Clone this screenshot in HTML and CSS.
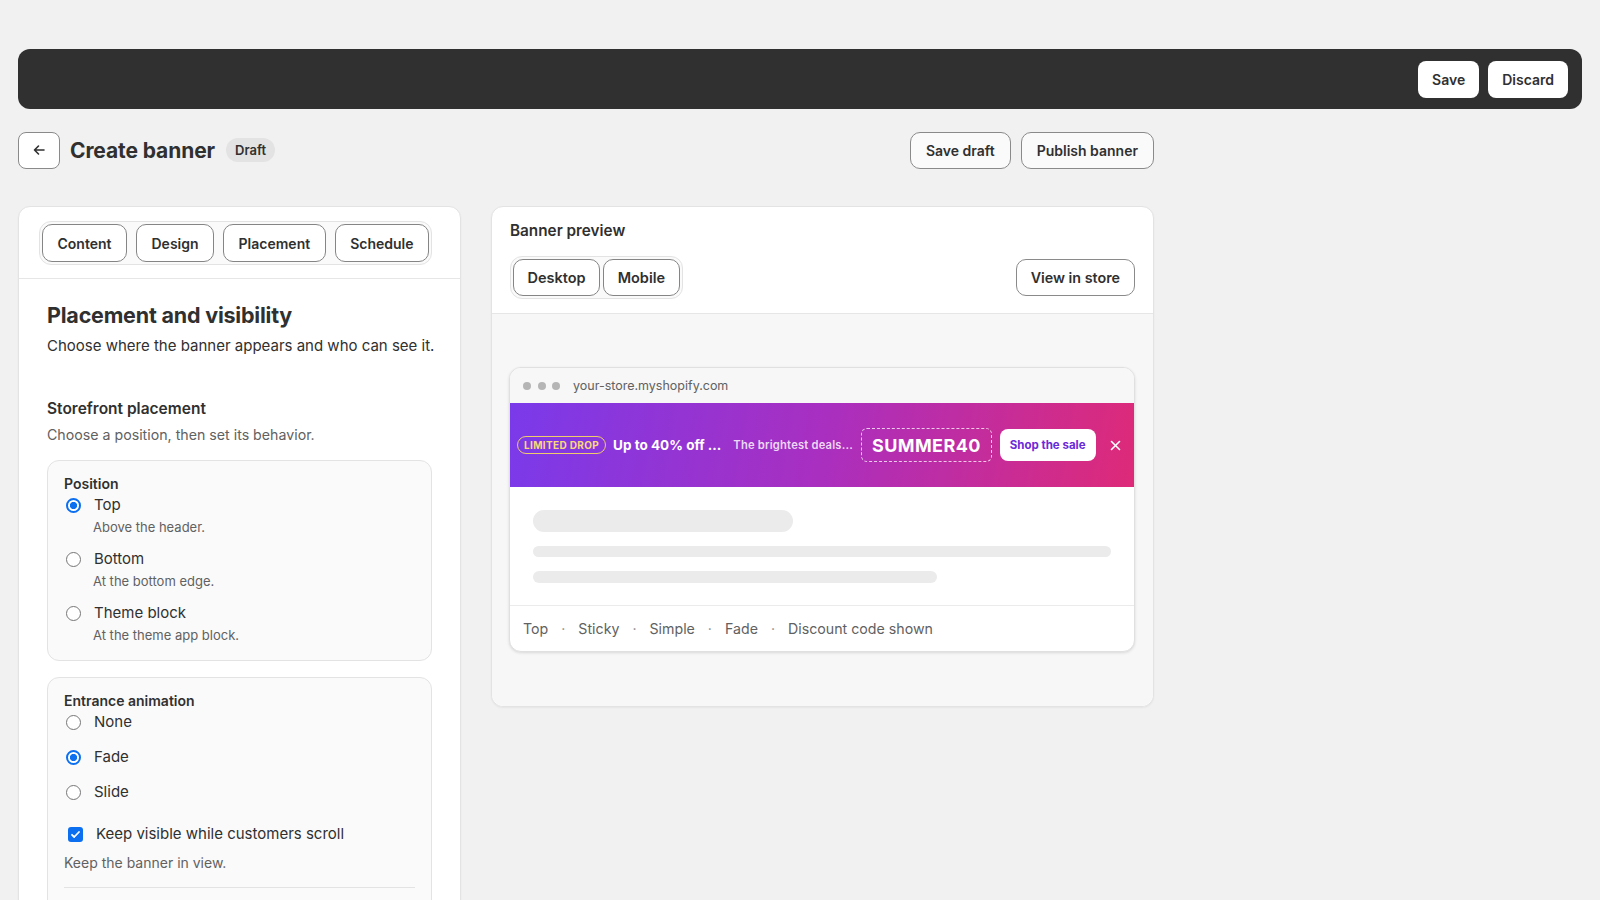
FILE: index.html
```html
<!DOCTYPE html>
<html lang="en">
<head>
<meta charset="utf-8">
<title>Create banner</title>
<link rel="stylesheet" href="styles.css">
</head>
<body>
<div class="page">
  <div class="topbar">
    <button class="btn-light">Save</button>
    <button class="btn-light">Discard</button>
  </div>

  <div class="wrap">
    <div class="header">
      <button class="back-btn" aria-label="Back">
        <svg width="14" height="14" viewBox="0 0 14 14"><path d="M12 7H2.5M6.5 3L2.5 7l4 4" fill="none" stroke="#303030" stroke-width="1.6" stroke-linecap="round" stroke-linejoin="round"/></svg>
      </button>
      <h1 class="title">Create banner</h1>
      <span class="badge">Draft</span>
      <div class="spacer"></div>
      <button class="btn-outline">Save draft</button>
      <button class="btn-outline">Publish banner</button>
    </div>

    <div class="main">
      <section class="card left-card">
        <div class="card-head">
          <div class="tabgroup">
            <button class="tab">Content</button>
            <button class="tab">Design</button>
            <button class="tab">Placement</button>
            <button class="tab">Schedule</button>
          </div>
        </div>
        <div class="card-body">
          <h2 class="section-title">Placement and visibility</h2>
          <p class="section-sub">Choose where the banner appears and who can see it.</p>

          <h3 class="group-title">Storefront placement</h3>
          <p class="group-sub">Choose a position, then set its behavior.</p>

          <div class="optcard pos-card">
            <div class="opt-label">Position</div>
            <div class="options">
              <div class="option">
                <div class="opt-row"><span class="radio on"></span><span>Top</span></div>
                <div class="opt-desc">Above the header.</div>
              </div>
              <div class="option">
                <div class="opt-row"><span class="radio"></span><span>Bottom</span></div>
                <div class="opt-desc">At the bottom edge.</div>
              </div>
              <div class="option">
                <div class="opt-row"><span class="radio"></span><span>Theme block</span></div>
                <div class="opt-desc">At the theme app block.</div>
              </div>
            </div>
          </div>

          <div class="optcard anim-card">
            <div class="opt-label">Entrance animation</div>
            <div class="options compact">
              <div class="opt-row"><span class="radio"></span><span>None</span></div>
              <div class="opt-row"><span class="radio on"></span><span>Fade</span></div>
              <div class="opt-row"><span class="radio"></span><span>Slide</span></div>
            </div>
            <div class="check-row">
              <span class="checkbox"><svg width="11" height="11" viewBox="0 0 11 11"><path d="M2 5.8l2.2 2.2L9 3" fill="none" stroke="#fff" stroke-width="1.8" stroke-linecap="round" stroke-linejoin="round"/></svg></span>
              <span>Keep visible while customers scroll</span>
            </div>
            <div class="check-desc">Keep the banner in view.</div>
            <div class="divider"></div>
            <div class="more-space"></div>
          </div>
        </div>
      </section>

      <section class="card right-card">
        <div class="preview-head">
          <div class="preview-title">Banner preview</div>
          <div class="preview-controls">
            <div class="seg">
              <button class="tab">Desktop</button>
              <button class="tab">Mobile</button>
            </div>
            <button class="btn-outline">View in store</button>
          </div>
        </div>
        <div class="preview-area">
          <div class="browser">
            <div class="browser-bar">
              <span class="dot"></span><span class="dot"></span><span class="dot"></span>
              <span class="url">your-store.myshopify.com</span>
            </div>
            <div class="promo">
              <span class="pill">LIMITED DROP</span>
              <span class="promo-head">Up to 40% off ...</span>
              <span class="promo-sub">The brightest deals...</span>
              <span class="code">SUMMER40</span>
              <span class="shop-btn">Shop the sale</span>
              <span class="close">
                <svg width="11" height="11" viewBox="0 0 11 11"><path d="M1.5 1.5l8 8M9.5 1.5l-8 8" stroke="#fff" stroke-width="1.6" stroke-linecap="round"/></svg>
              </span>
            </div>
            <div class="skeleton">
              <div class="sk sk1"></div>
              <div class="sk sk2"></div>
              <div class="sk sk3"></div>
            </div>
            <div class="summary">
              <span>Top</span><span class="sep">·</span>
              <span>Sticky</span><span class="sep">·</span>
              <span>Simple</span><span class="sep">·</span>
              <span>Fade</span><span class="sep">·</span>
              <span>Discount code shown</span>
            </div>
          </div>
        </div>
      </section>
    </div>
  </div>
</div>
</body>
</html>
```

FILE: styles.css
```css
* { box-sizing: border-box; }
html, body { margin: 0; padding: 0; }
body {
  background: #f1f1f1;
  font-family: Inter, "Noto Sans", "Liberation Sans", sans-serif;
  color: #303030;
}
button { font-family: inherit; color: inherit; cursor: pointer; }
h1, h2, h3, p { margin: 0; }

.page { padding: 49px 18px 0; }

.topbar {
  height: 60px;
  background: #303030;
  border-radius: 12px;
  display: flex;
  justify-content: flex-end;
  align-items: center;
  gap: 9px;
  padding: 0 14px;
}
.btn-light {
  height: 37px;
  background: #fff;
  border: none;
  border-radius: 8px;
  padding: 0 14px;
  font-size: 14px;
  font-weight: 600;
  color: #303030;
}

.wrap { width: 1136px; }

.header {
  margin-top: 23px;
  height: 36px;
  display: flex;
  align-items: center;
}
.back-btn {
  width: 42px;
  height: 37px;
  border: 1px solid #8a8a8a;
  border-radius: 8px;
  background: #fff;
  display: flex;
  align-items: center;
  justify-content: center;
  padding: 0;
}
.title {
  margin-left: 10px;
  font-size: 21px;
  font-weight: 700;
  letter-spacing: -0.1px;
}
.badge {
  margin-left: 11px;
  height: 24px;
  padding: 0 9px;
  border-radius: 12px;
  background: #e3e3e3;
  font-size: 13px;
  font-weight: 600;
  display: inline-flex;
  align-items: center;
}
.spacer { flex: 1; }
.btn-outline {
  height: 37px;
  border: 1px solid #8a8a8a;
  border-radius: 10px;
  background: #fafafa;
  padding: 0 15px;
  font-size: 14px;
  font-weight: 600;
  margin-left: 10px;
}

.main {
  margin-top: 38px;
  display: grid;
  grid-template-columns: 443px 663px;
  gap: 30px;
  align-items: start;
}
.card {
  background: #fff;
  border: 1px solid #e3e3e3;
  border-radius: 12px;
  box-shadow: 0 1px 2px rgba(0,0,0,0.05);
}

.card-head {
  padding: 14px 20px 13px;
  border-bottom: 1px solid #e6e6e6;
}
.tabgroup, .seg {
  display: inline-flex;
  border: 1px solid #e3e3e3;
  border-radius: 12px;
  padding: 2px;
  gap: 9px;
  background: #fafafa;
}
.seg { gap: 3px; }
.tab {
  height: 38px;
  border: 1px solid #858585;
  border-radius: 10px;
  background: #fff;
  padding: 0 14.5px;
  font-size: 14px;
  font-weight: 600;
}
.seg .tab { height: 37px; padding: 0 13.5px; font-size: 14.5px; }

.card-body { padding: 22px 28px 0; }
.section-title {
  font-size: 21.5px;
  line-height: 28px;
  font-weight: 700;
  letter-spacing: -0.2px;
}
.section-sub {
  margin-top: 6px;
  font-size: 15px;
  line-height: 22px;
  white-space: nowrap;
}
.group-title {
  margin-top: 41px;
  font-size: 15.5px;
  line-height: 22px;
  font-weight: 600;
}
.group-sub {
  margin-top: 5px;
  font-size: 14.2px;
  line-height: 20px;
  color: #616161;
}

.optcard {
  background: #fafafa;
  border: 1px solid #e3e3e3;
  border-radius: 12px;
  padding: 13px 16px 16px;
}
.pos-card { margin-top: 15px; }
.anim-card { margin-top: 16px; padding-top: 13px; }
.opt-label {
  font-size: 14px;
  line-height: 20px;
  font-weight: 600;
}
.options { display: flex; flex-direction: column; gap: 12px; }
.options.compact { gap: 13px; }
.opt-row {
  display: flex;
  align-items: center;
  gap: 13px;
  font-size: 15px;
  line-height: 22px;
  padding-left: 2px;
}
.opt-desc {
  margin-top: 2px;
  padding-left: 29px;
  font-size: 13px;
  line-height: 18px;
  color: #616161;
}
.radio {
  width: 15px;
  height: 15px;
  border-radius: 50%;
  border: 1px solid #767676;
  background: #fff;
  flex: none;
}
.radio.on {
  border: 2px solid #0b6ff0;
  background: radial-gradient(circle, #0b6ff0 0 3.3px, #fff 3.9px);
}
.check-row {
  margin-top: 20px;
  display: flex;
  align-items: center;
  gap: 13px;
  padding-left: 4px;
  font-size: 15px;
  line-height: 22px;
}
.checkbox {
  width: 15px;
  height: 15px;
  border-radius: 3px;
  background: #0b6ff0;
  display: flex;
  align-items: center;
  justify-content: center;
  flex: none;
}
.check-desc {
  margin-top: 8px;
  font-size: 14px;
  line-height: 20px;
  color: #616161;
}
.divider {
  margin-top: 14px;
  height: 1px;
  background: #e3e3e3;
}
.more-space { height: 60px; }

/* Right card */
.preview-head {
  padding: 14px 18px 14px;
  border-bottom: 1px solid #e6e6e6;
}
.preview-title {
  font-size: 15.3px;
  line-height: 20px;
  font-weight: 600;
}
.preview-controls {
  margin-top: 15px;
  display: flex;
  justify-content: space-between;
  align-items: center;
}
.preview-controls .btn-outline { margin-left: 0; background: #fff; padding: 0 14px; font-size: 14.3px; }

.preview-area {
  background: #f7f7f7;
  padding: 53px 18px 54px 17px;
  border-radius: 0 0 12px 12px;
}
.browser {
  background: #fff;
  border: 1px solid #e0e0e0;
  border-radius: 12px;
  overflow: hidden;
  box-shadow: 0 1px 3px rgba(0,0,0,0.12);
}
.browser-bar {
  height: 35px;
  background: #f7f7f7;
  display: flex;
  align-items: center;
  padding-left: 13px;
  gap: 6.5px;
}
.dot {
  width: 8px;
  height: 8px;
  border-radius: 50%;
  background: #b5b5b5;
}
.url {
  margin-left: 6.5px;
  font-size: 12.5px;
  color: #616161;
}
.promo {
  height: 84px;
  background: linear-gradient(100deg, #7a3aea 0%, #a92fc0 50%, #de2a78 100%);
  display: flex;
  align-items: center;
  padding: 0 13px 0 7px;
  color: #fff;
  white-space: nowrap;
}
.pill {
  height: 18px;
  border: 1.5px solid #f0cc6a;
  border-radius: 10px;
  padding: 0 6px;
  color: #fbd77b;
  font-size: 10px;
  font-weight: 700;
  letter-spacing: 0.35px;
  display: inline-flex;
  align-items: center;
}
.promo-head {
  margin-left: 7px;
  font-size: 13.5px;
  font-weight: 700;
}
.promo-sub {
  margin-left: 12px;
  font-size: 11.2px;
  font-weight: 600;
  color: rgba(255,255,255,0.82);
  letter-spacing: 0.2px;
}
.code {
  margin-left: 8px;
  height: 34px;
  border: 1.5px dashed rgba(255,255,255,0.75);
  border-radius: 6px;
  padding: 0 10px;
  font-size: 18px;
  font-weight: 700;
  letter-spacing: 0.4px;
  display: inline-flex;
  align-items: center;
}
.shop-btn {
  margin-left: 8px;
  height: 32px;
  background: #fff;
  border-radius: 8px;
  padding: 0 10px;
  color: #6b2ad8;
  font-size: 11.5px;
  font-weight: 700;
  display: inline-flex;
  align-items: center;
}
.close {
  margin-left: auto;
  display: inline-flex;
}
.skeleton { padding: 23px 23px 22px; border-bottom: 1px solid #ebebeb; }
.sk { background: #ebebeb; border-radius: 11px; }
.sk1 { width: 260px; height: 22px; }
.sk2 { margin-top: 14px; height: 11px; border-radius: 6px; }
.sk3 { margin-top: 14px; width: 404px; height: 12px; border-radius: 6px; }
.summary {
  height: 45px;
  display: flex;
  align-items: center;
  gap: 13px;
  padding-left: 13px;
  font-size: 14.2px;
  color: #616161;
}
.sep { color: #8a8a8a; }
```
